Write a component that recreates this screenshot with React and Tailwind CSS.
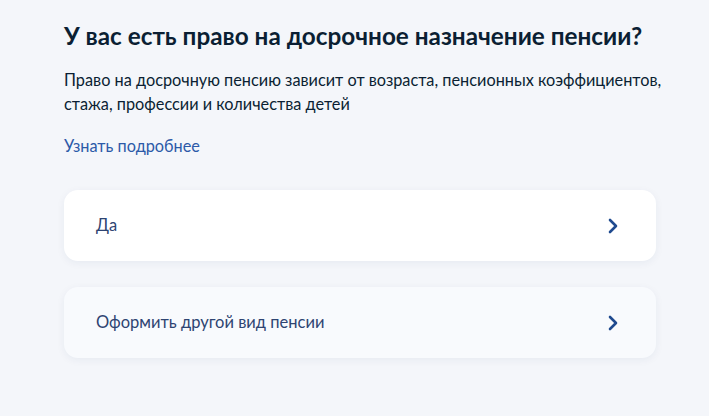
const options = ["Да", "Оформить другой вид пенсии"];

const Chevron = () => (
  <svg className="w-[10px] h-[16px] text-[#1f4a8f]" fill="none" stroke="currentColor" strokeWidth="2.6" strokeLinecap="round" strokeLinejoin="round" viewBox="0 0 10 16">
    <path d="M2 2l6 6-6 6" />
  </svg>
);

const App = () => (
  <div className="min-h-[416px] bg-[#f4f6fa] font-['Lato','Noto_Sans',sans-serif]">
    <div className="pl-[64px] pt-[20px]">
      <h1 className="text-[24.3px] leading-[32px] font-bold text-[#0b1f33]">
        У вас есть право на досрочное назначение пенсии?
      </h1>
      <p className="mt-[16px] w-[610px] text-[16.3px] leading-[24px] text-[#0b1f33]">
        Право на досрочную пенсию зависит от возраста, пенсионных коэффициентов, стажа, профессии и количества детей
      </p>
      <a className="block mt-[18px] text-[16.3px] leading-[24px] text-[#2c5aa8]">Узнать подробнее</a>
      <div className="mt-[32px] flex flex-col gap-[26px] w-[592px]">
        {options.map((o, i) => (
          <div
            key={i}
            className={`h-[71px] rounded-[14px] flex items-center justify-between pl-[32px] pr-[38px] shadow-[0_2px_8px_rgba(20,50,110,0.06)] ${i === 0 ? "bg-white" : "bg-[#f8fafd]"}`}
          >
            <span className="text-[16.5px] text-[#2e4472]">{o}</span>
            <Chevron />
          </div>
        ))}
      </div>
    </div>
  </div>
);

export default App;
